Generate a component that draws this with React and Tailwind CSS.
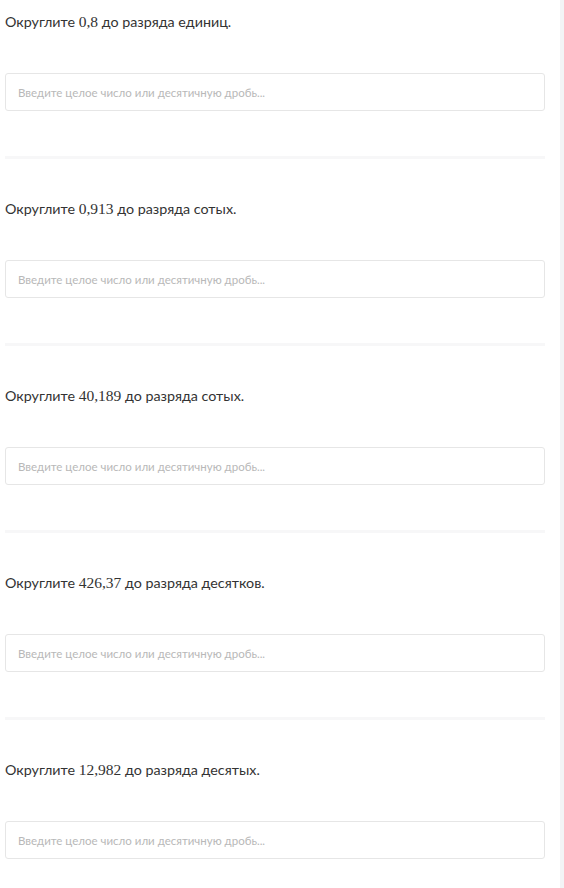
const questions = [
  { num: "0,8", rest: "до разряда единиц." },
  { num: "0,913", rest: "до разряда сотых." },
  { num: "40,189", rest: "до разряда сотых." },
  { num: "426,37", rest: "до разряда десятков." },
  { num: "12,982", rest: "до разряда десятых." },
]

export default function App() {
  return (
    <div className="flex min-h-[888px] w-[564px] bg-white" style={{ fontFamily: "Lato, 'Noto Sans', sans-serif" }}>
      <div className="w-[560px] pl-[5px] pt-[12px]">
        {questions.map((q, i) => (
          <div key={i} className={i > 0 ? "mt-[40px] w-[540px]" : "w-[540px]"}>
            <p className="h-5 text-[14.3px] leading-5 text-[#333]">
              Округлите{" "}
              <span className="text-[15.5px]" style={{ fontFamily: "'Liberation Serif', serif" }}>{q.num}</span>{" "}
              {q.rest}
            </p>
            <input
              type="text"
              placeholder="Введите целое число или десятичную дробь..."
              className="mt-[41px] block h-[38px] w-full rounded-[3px] border border-[#e6e6e6] pl-[12px] text-[11.5px] text-[#333] placeholder:text-[#b8b8b8] outline-none"
            />
            <div className="mt-[45px] h-[3px] w-full bg-[#f7f7f8]" />
          </div>
        ))}
      </div>
      <div className="w-[4px] bg-[#f3f4f6]" />
    </div>
  )
}
